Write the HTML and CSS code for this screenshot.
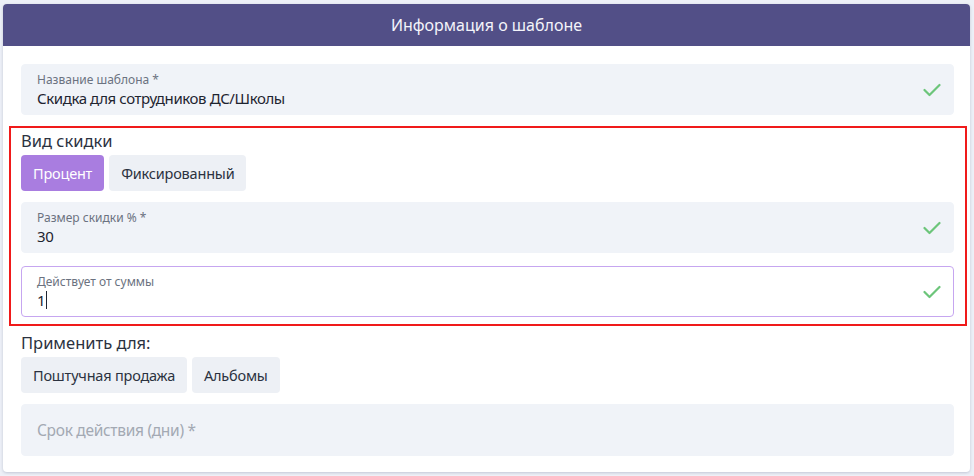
FILE: index.html
```html
<!DOCTYPE html>
<html lang="ru">
<head>
    <meta charset="UTF-8">
    <meta name="viewport" content="width=device-width, initial-scale=1.0">
    <title>Информация о шаблоне</title>
    <link rel="stylesheet" href="styles.css">
</head>
<body>
    <div class="card">
        <div class="card-header">Информация о шаблоне</div>
        <div class="card-body">
            <div class="field">
                <div class="field-text">
                    <div class="field-label">Название шаблона *</div>
                    <div class="field-value">Скидка для сотрудников ДС/Школы</div>
                </div>
                <svg class="check" width="18" height="14" viewBox="0 0 18 14"><polyline points="1.5,7 6.5,12 16.5,2" fill="none" stroke="#6cc57a" stroke-width="2.2" stroke-linecap="round" stroke-linejoin="round"/></svg>
            </div>

            <div class="highlight">
                <div class="group-title">Вид скидки</div>
                <div class="btn-row">
                    <button class="btn btn-active">Процент</button>
                    <button class="btn">Фиксированный</button>
                </div>
                <div class="field">
                    <div class="field-text">
                        <div class="field-label">Размер скидки % *</div>
                        <div class="field-value">30</div>
                    </div>
                    <svg class="check" width="18" height="14" viewBox="0 0 18 14"><polyline points="1.5,7 6.5,12 16.5,2" fill="none" stroke="#6cc57a" stroke-width="2.2" stroke-linecap="round" stroke-linejoin="round"/></svg>
                </div>
                <div class="field field-focus">
                    <div class="field-text">
                        <div class="field-label">Действует от суммы</div>
                        <div class="field-value">1<span class="caret"></span></div>
                    </div>
                    <svg class="check" width="18" height="14" viewBox="0 0 18 14"><polyline points="1.5,7 6.5,12 16.5,2" fill="none" stroke="#6cc57a" stroke-width="2.2" stroke-linecap="round" stroke-linejoin="round"/></svg>
                </div>
            </div>

            <div class="group-title">Применить для:</div>
            <div class="btn-row">
                <button class="btn">Поштучная продажа</button>
                <button class="btn">Альбомы</button>
            </div>
            <div class="field field-empty">
                <div class="placeholder">Срок действия (дни) *</div>
            </div>
        </div>
    </div>
</body>
</html>
```

FILE: styles.css
```css
body {
    margin: 0;
    padding: 4px 4px 3px 3px;
    background: #edf0f7;
    font-family: "Noto Sans", "Open Sans", sans-serif;
    color: #2b3240;
}
.card {
    background: white;
    border-radius: 4px;
    box-shadow: 0 1px 3px rgba(60, 70, 110, 0.25);
    overflow: hidden;
}
.card-header {
    background: #524f87;
    color: #f4f4fa;
    height: 42px;
    line-height: 42px;
    text-align: center;
    font-size: 16px;
}
.card-body {
    padding: 18px 16px 16px 18px;
}
.field {
    display: flex;
    align-items: center;
    justify-content: space-between;
    height: 51px;
    box-sizing: border-box;
    padding: 0 12px 0 15px;
    background: #f0f3f8;
    border: 1px solid #f0f3f8;
    border-radius: 4px;
}
.field-focus {
    background: white;
    border-color: #c6a6f0;
}
.field-label {
    font-size: 12px;
    color: #6b7280;
    line-height: 16px;
}
.field-value {
    font-size: 15px;
    letter-spacing: -0.4px;
    color: #1e2430;
    line-height: 20px;
}
.caret {
    display: inline-block;
    width: 1px;
    height: 18px;
    background: #1e2430;
    vertical-align: -3px;
    margin-left: 1px;
}
.highlight {
    margin: 11px -13px 0 -12px;
    padding: 0 11px 7px 10px;
    border: 2px solid #f01a1a;
}
.highlight .field {
    margin-bottom: 13px;
}
.highlight .field-focus {
    margin-bottom: 0;
}
.group-title {
    font-size: 16.5px;
    line-height: 24px;
    margin-top: 1px;
    color: #2b3240;
}
.btn-row {
    display: flex;
    gap: 5px;
    margin: 2px 0 11px;
}
.btn {
    height: 36px;
    padding: 0 12px;
    border: none;
    border-radius: 4px;
    background: #edf0f5;
    color: #2b3240;
    font-family: inherit;
    font-size: 14.5px;
    letter-spacing: -0.2px;
}
.btn-active {
    background: #a97de0;
    color: white;
}
.highlight + .group-title {
    margin-top: 5px;
}
.field-empty {
    height: 52px;
    margin-top: 2px;
}
.placeholder {
    font-size: 15.5px;
    letter-spacing: -0.3px;
    color: #a3a9b3;
}
```
